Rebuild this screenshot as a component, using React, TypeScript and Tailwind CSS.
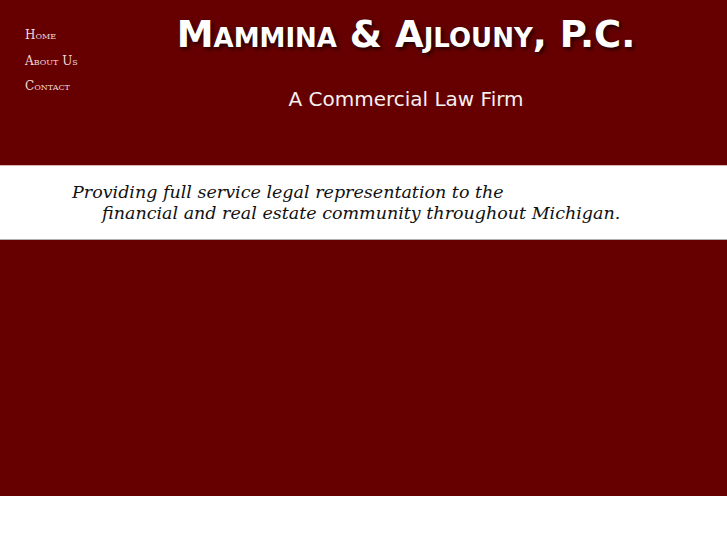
const navItems = ['Home', 'About Us', 'Contact'];

const App = () => {
  return (
    <div className="w-full min-h-screen bg-white">
      <div className="flex h-[165px] bg-[#660000]">
        <ul className="w-[85px] shrink-0 pl-[25px] pt-[27px]">
          {navItems.map((item) => (
            <li
              key={item}
              className="h-[25.5px] text-[12px] leading-[17px] text-[#f0dcdc] [font-variant:small-caps] whitespace-nowrap"
              style={{ fontFamily: '"DejaVu Serif", serif' }}
            >
              {item}
            </li>
          ))}
        </ul>

        <div className="flex-1 text-center">
          <h1
            className="mt-[11px] text-[37px] leading-[48px] font-bold text-white [font-variant:small-caps] [text-shadow:2px_2px_4px_rgba(0,0,0,0.75)]"
            style={{ fontFamily: '"DejaVu Sans", sans-serif' }}
          >
            Mammina &amp; Ajlouny, P.C.
          </h1>
          <p
            className="mt-[28px] text-[20px] leading-[24px] text-[#f5f0f0]"
            style={{ fontFamily: '"DejaVu Sans", sans-serif' }}
          >
            A Commercial Law Firm
          </p>
        </div>
      </div>

      <div className="h-[75px] border-t border-[#d9b3b3] border-b border-b-[#b0b0b0] pl-[72px] pt-[16px]">
        <p
          className="text-[17.5px] leading-[21px] italic text-[#111]"
          style={{ fontFamily: '"DejaVu Serif", serif' }}
        >
          Providing full service legal representation to the
          <br />
          <span className="pl-[30px]">financial and real estate community throughout Michigan.</span>
        </p>
      </div>

      <div className="h-[256px] bg-[#660000]" />
    </div>
  );
};

export default App;
